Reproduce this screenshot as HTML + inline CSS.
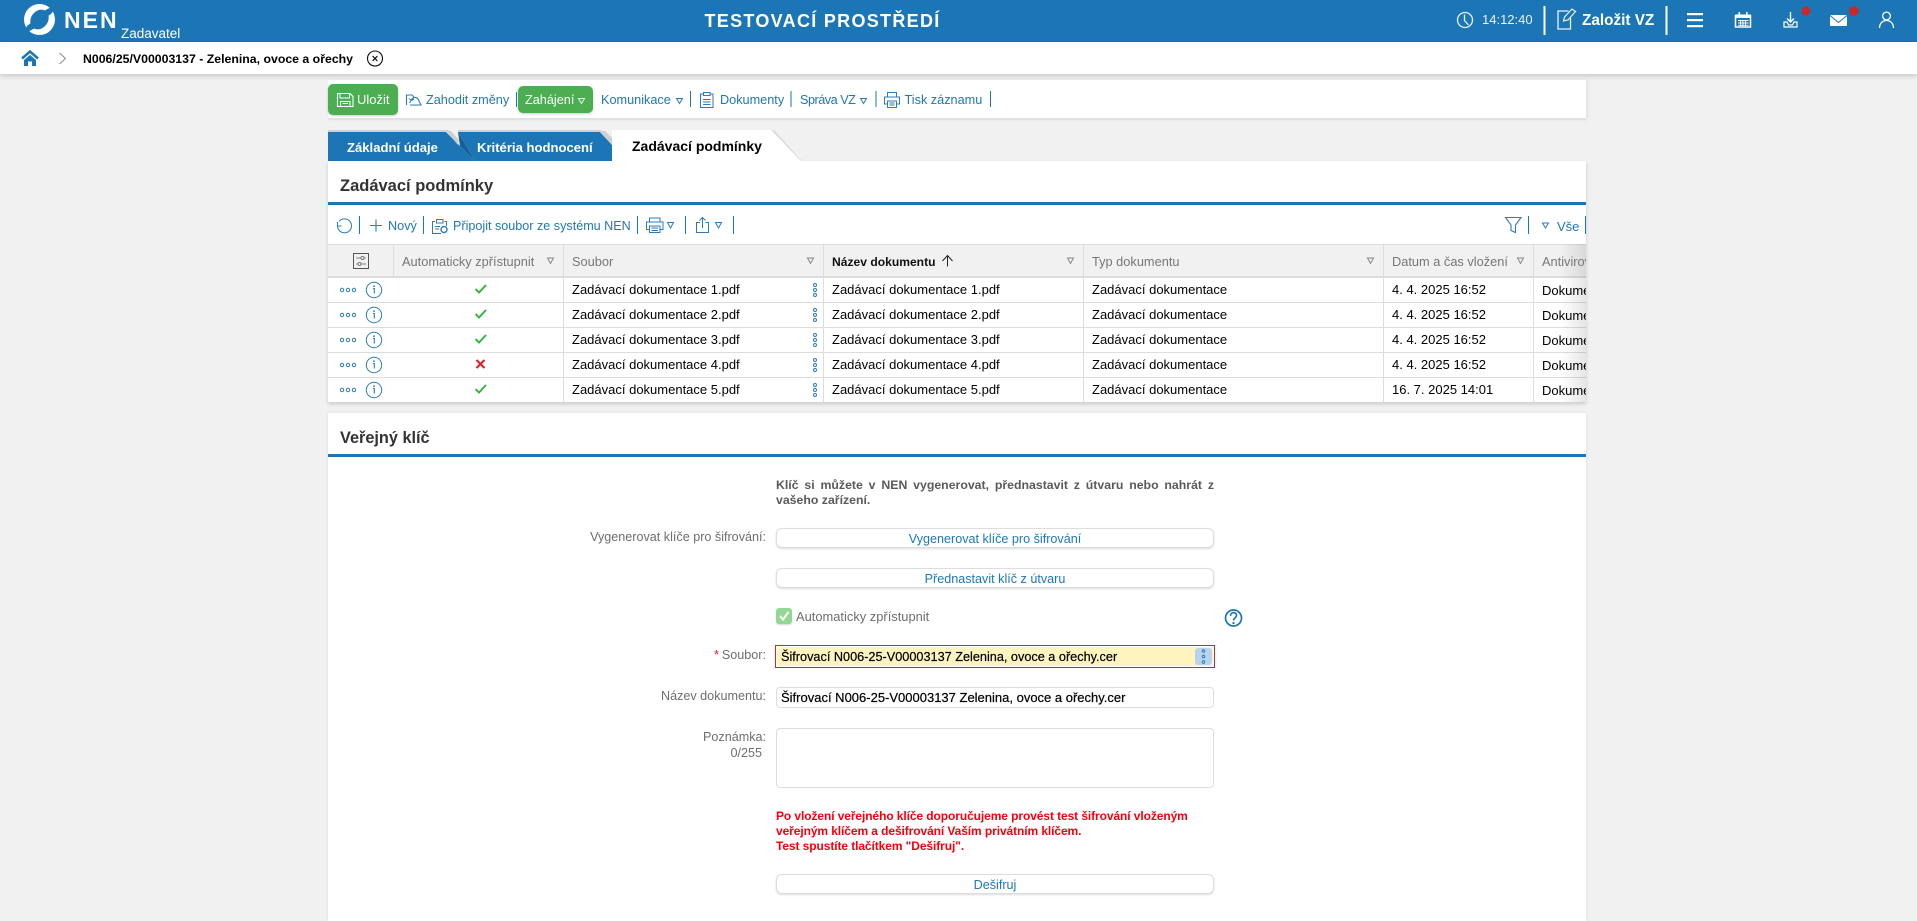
<!DOCTYPE html>
<html lang="cs"><head><meta charset="utf-8"><title>NEN</title>
<style>
html,body{margin:0;padding:0;width:1917px;height:921px;overflow:hidden;background:#f1f1f1;font-family:"Liberation Sans",sans-serif;font-size:13px;color:#000}
.a{position:absolute}
.t{position:absolute;white-space:nowrap;line-height:16px;height:16px}
.b{color:#1f77b5}
.g{color:#777}
.h{color:#777;font-size:12.8px}
.w{color:#fff}
.s{font-weight:bold}
.lbl{position:absolute;white-space:nowrap;line-height:16px;height:16px;color:#6e6e6e;text-align:right;font-size:12.6px}
.btn{position:absolute;left:776px;width:436px;height:18px;border:1px solid #ddd;border-radius:6px;background:#fff;box-shadow:0 1px 2px rgba(0,0,0,.14);text-align:center;line-height:20px;color:#1f77b5;font-size:12.6px}
svg{position:absolute;left:0;top:0}
</style></head><body>
<div class="a" style="left:0;top:0;width:1917px;height:42px;background:#1c75b4"></div>
<div class="a" style="left:0;top:42px;width:1917px;height:32px;background:#fff;box-shadow:0 2px 5px rgba(0,0,0,.18)"></div>
<div class="a" style="left:328px;top:80px;width:1258px;height:38px;background:#fff;border-bottom:2px solid #e2e2e2;box-shadow:2px 0 3px rgba(0,0,0,.06)"></div>
<div class="a" style="left:328px;top:161px;width:1258px;height:241px;background:#fff;box-shadow:0 2px 4px rgba(0,0,0,.16)"></div>
<div class="a" style="left:328px;top:413px;width:1258px;height:508px;background:#fff;box-shadow:0 0 3px rgba(0,0,0,.1)"></div>
<div class="a" style="left:328px;top:202px;width:1258px;height:3px;background:#1c75b4"></div>
<div class="a" style="left:328px;top:454px;width:1258px;height:3px;background:#1c75b4"></div>
<div class="a" style="left:328px;top:244px;width:1258px;height:31px;background:#f1f1f1;border-top:1px solid #ddd;border-bottom:2px solid #ddd"></div>
<div class="a" style="left:328px;top:84px;width:70px;height:31px;background:#4cae51;border-radius:5px;box-shadow:0 1px 2px rgba(0,0,0,.2)"></div>
<div class="a" style="left:517.500px;top:86px;width:75.500px;height:27px;background:#4cae51;border-radius:5px;box-shadow:0 1px 2px rgba(0,0,0,.2)"></div>
<div class="btn" style="top:528px">Vygenerovat klíče pro šifrování</div>
<div class="btn" style="top:568px">Přednastavit klíč z útvaru</div>
<div class="btn" style="top:874px">Dešifruj</div>
<div class="a" style="left:775px;top:645px;width:438px;height:21px;border:1px solid #d8232a;background:#fff"></div>
<div class="a" style="left:777px;top:647px;width:436px;height:19px;background:#fdf5bd;border-radius:4px"></div>
<div class="a" style="left:1195px;top:648px;width:17px;height:17px;background:#b9d3ee;border-radius:3px"></div>
<div class="a" style="left:776px;top:687px;width:436px;height:19px;border:1px solid #ddd;border-radius:4px;background:#fff"></div>
<div class="a" style="left:776px;top:728px;width:436px;height:58px;border:1px solid #ddd;border-radius:4px;background:#fff"></div>
<div class="a" style="left:776px;top:608px;width:16px;height:16px;background:#92d794;border-radius:3px;box-shadow:0 1px 1px rgba(0,0,0,.15)"></div>

<svg width="1917" height="921" viewBox="0 0 1917 921" fill="none">
<!-- tabs -->
<rect x="328" y="130" width="120" height="2" fill="#d0d0d0"/><rect x="458" y="130" width="143" height="2" fill="#d0d0d0"/>
<path d="M328 132H446L475 161H328Z" fill="#1c75b4"/>
<path d="M446 130.500L451 131L459 140L458 145Z" fill="#cfcfcf"/>
<path d="M458 132L475 161L460 146Z" fill="#155f96"/>
<path d="M458 132H600L612 145V161H475Z" fill="#1c75b4"/>
<path d="M600 131L605 131L612 138V145Z" fill="#cfcfcf"/>
<path d="M612 130H771L801 161H612Z" fill="#fff"/>
<path d="M771 130L775 131L802 161H801Z" fill="#dcdcdc"/>
<!-- logo -->
<circle cx="39.500" cy="19.500" r="15.500" fill="#fff"/>
<ellipse cx="39.500" cy="19.500" rx="8.500" ry="10.500" transform="rotate(35 39.500 19.500)" fill="#1c75b4"/>
<path d="M44 11C48 8.500 51 7 55 7L52 13L47 17Z" fill="#1c75b4"/>
<path d="M35 28C31 30.500 28 32 24 32L27 26L32 22Z" fill="#1c75b4"/>
<!-- home -->
<path d="M22 58.500L30 51.500L38 58.500" stroke="#1c75b4" stroke-width="2.500"/>
<path d="M24 60L30 55L36 60V66H32V61.500H28V66H24Z" fill="#1c75b4"/>
<path d="M59.500 53L65.500 58.500L59.500 64" stroke="#8a8a8a" stroke-width="1"/>
<circle cx="375" cy="58.500" r="7.500" stroke="#111" stroke-width="1.100"/><path d="M372.600 56.100L377.400 60.900M377.400 56.100L372.600 60.900" stroke="#111" stroke-width="1.200"/>
<!-- header right -->
<circle cx="1465" cy="20" r="7.500" stroke="#e9f2f8" stroke-width="1.300"/><path d="M1464.500 14.500V20.500L1468.500 25" stroke="#e9f2f8" stroke-width="1.300"/>
<rect x="1543.500" y="6" width="2" height="29" fill="#fff"/><rect x="1665.500" y="6" width="2" height="29" fill="#fff"/>
<g transform="translate(-2.500 0)"><path d="M1571 14H1560.500V32H1573V21" stroke="#e9f2f8" stroke-width="1.300" transform="translate(0 -3) scale(1 1)"/><path d="M1566 21L1567 17L1574.500 9L1578 11.500L1570.500 20Z" stroke="#e9f2f8" stroke-width="1.200"/></g>
<rect x="1687" y="13" width="16" height="2.200" fill="#fff"/><rect x="1687" y="19" width="16" height="2.200" fill="#fff"/><rect x="1687" y="25" width="16" height="2.200" fill="#fff"/>
<g transform="translate(-1.500 0)"><path d="M1737 15.500H1752V27H1737Z" stroke="#fff" stroke-width="1.500"/><rect x="1737" y="14.500" width="15" height="3.500" fill="#fff"/><rect x="1740" y="12" width="1.600" height="3" fill="#fff"/><rect x="1747.500" y="12" width="1.600" height="3" fill="#fff"/><path d="M1739.500 20.500H1750M1739.500 23H1750M1739.500 25.300H1750M1742 20V26M1744.500 20V26M1747 20V26" stroke="#fff" stroke-width=".9"/></g>
<g transform="translate(-2.500 0)"><path d="M1793 12V22M1789.500 18.500L1793 22L1796.500 18.500" stroke="#fff" stroke-width="1.400"/><path d="M1786.500 22H1789.500L1791 25H1795L1796.500 22H1799.500V27H1786.500Z" fill="none" stroke="#fff" stroke-width="1.200"/></g>
<circle cx="1806" cy="11" r="4.500" fill="#c62a2a"/>
<rect x="1830" y="15" width="17" height="11" rx="1" fill="#fff"/><path d="M1830 15.500L1838.500 22.500L1847 15.500" stroke="#1c75b4" stroke-width="1"/>
<circle cx="1854" cy="11" r="4.800" fill="#c62a2a"/>
<g transform="translate(-1.500 0)"><circle cx="1888" cy="16" r="3.900" stroke="#fff" stroke-width="1.300"/><path d="M1881 28C1881 23.500 1884 20.500 1888 20.500C1892 20.500 1895 23.500 1895 28" stroke="#fff" stroke-width="1.300"/></g>
<!-- save -->
<path d="M337.500 93.500H350L353 96.500V106.500H337.500Z" stroke="#fff" stroke-width="1.100"/><path d="M340 93.500V98H349.500V93.500M340.500 106.500V101.500H350V106.500M342.500 103.500H348" stroke="#fff" stroke-width="1"/>
<path d="M406.500 105V95H412L414 97" stroke="#2a7db9" stroke-width="1.100"/><path d="M410 105H421L418 99C416 96.500 413 97 411.500 100L409.500 103M409 98.500L411.500 100.500L414 99" stroke="#2a7db9" stroke-width="1.100"/>
<rect x="516" y="92" width="1" height="15" fill="#1c75b4"/>
<path d="M578.500 98.500H584.500L581.500 103.500Z" stroke="#e8f5e8" stroke-width="1"/>
<path d="M676.500 98.500H682.500L679.500 103.500Z" stroke="#2a7db9" stroke-width="1"/>
<rect x="690" y="91" width="1" height="16" fill="#1c75b4"/>
<path d="M703 94H700.500V107.500H713V94H710.500M703.500 92.500H710V95.500H703.500ZM703 99.500H710.500M703 102H710.500M703 104.500H710.500" stroke="#2a7db9" stroke-width="1"/>
<rect x="790.500" y="91" width="1" height="16" fill="#1c75b4"/>
<path d="M860.500 98.500H866.500L863.500 103.500Z" stroke="#2a7db9" stroke-width="1"/>
<rect x="875.500" y="91" width="1" height="16" fill="#1c75b4"/>
<path d="M887.500 97V92.500H896.500V97M887 104H884.500V97H899.500V104H897M887.500 101H896.500V107.500H887.500ZM889.500 103H894.500M889.500 105H894.500" stroke="#2a7db9" stroke-width="1"/>
<rect x="990" y="91" width="1" height="16" fill="#1c75b4"/>
<!-- grid toolbar -->
<path d="M339 221.500A7 7 0 1 1 337.500 226M337.500 222V226H341.500" stroke="#2a7db9" stroke-width="1"/>
<rect x="359" y="216" width="1" height="18" fill="#1c75b4"/>
<path d="M376 219.500V231.500M370 225.500H382" stroke="#2a7db9" stroke-width="1.100"/>
<rect x="423" y="216" width="1" height="18" fill="#1c75b4"/>
<path d="M435 221.500H432.500V233.500H441M444.500 221.500H446.500V226M436.500 219.500H443V223H436.500ZM435 226.500H440M435 229H439" stroke="#2a7db9" stroke-width="1"/><circle cx="444" cy="229.500" r="3" stroke="#2a7db9" stroke-width="1.400"/>
<rect x="637" y="216" width="1" height="18" fill="#1c75b4"/>
<path d="M649.500 222V218H660V222M649 229.500H646.500V222H663V229.500H660.500M649.500 226H660V232.500H649.500ZM651.500 228H658M651.500 230.500H658" stroke="#2a7db9" stroke-width="1"/>
<path d="M667.500 222.500H673.500L670.500 228Z" stroke="#2a7db9" stroke-width="1"/>
<rect x="685" y="216" width="1" height="18" fill="#1c75b4"/>
<path d="M700 222.500H696.500V232.500H708.500V222.500H705.500M702.500 228V217.500M699.500 220.500L702.500 217.500L705.500 220.500" stroke="#2a7db9" stroke-width="1"/>
<path d="M715.500 222.500H721.500L718.500 228Z" stroke="#2a7db9" stroke-width="1"/>
<rect x="733" y="216" width="1" height="18" fill="#1c75b4"/>
<path d="M1505.500 217.500H1521L1515.500 225V232.500L1511 230.500V225Z" stroke="#2a7db9" stroke-width="1.100"/>
<rect x="1528" y="216" width="1" height="18" fill="#1c75b4"/>
<path d="M1542.500 223H1548.500L1545.500 228Z" stroke="#2a7db9" stroke-width="1"/>
<rect x="1585" y="216" width="1" height="18" fill="#1c75b4"/>
<!-- grid header -->
<rect x="353.500" y="253.500" width="15" height="15" stroke="#555" stroke-width="1"/><path d="M356 258H366M356 264H366" stroke="#888" stroke-width="1"/><circle cx="362.500" cy="258" r="1.500" fill="#fff" stroke="#777"/><circle cx="359.500" cy="264" r="1.500" fill="#fff" stroke="#777"/>
<g fill="#ddd"><rect x="393" y="245" width="1" height="31"/><rect x="563" y="245" width="1" height="157"/><rect x="823" y="245" width="1" height="157"/><rect x="1083" y="245" width="1" height="157"/><rect x="1383" y="245" width="1" height="157"/><rect x="1533" y="245" width="1" height="157"/>
<rect x="328" y="302" width="1258" height="1"/><rect x="328" y="327" width="1258" height="1"/><rect x="328" y="352" width="1258" height="1"/><rect x="328" y="377" width="1258" height="1"/></g>
<g stroke="#888" stroke-width="1"><path d="M547.500 258H553.500L550.500 263.500Z"/><path d="M807.500 258H813.500L810.500 263.500Z"/><path d="M1067.500 258H1073.500L1070.500 263.500Z"/><path d="M1367.500 258H1373.500L1370.500 263.500Z"/><path d="M1517.500 258H1523.500L1520.500 263.500Z"/></g>
<path d="M947.500 266.500V256M942.500 261L947.500 255.500L952.500 261" stroke="#222" stroke-width="1"/>
<defs><g id="dots"><circle cx="342" cy="0" r="1.700" stroke="#2a7db9" stroke-width="1"/><circle cx="348" cy="0" r="1.700" stroke="#2a7db9" stroke-width="1"/><circle cx="354" cy="0" r="1.700" stroke="#2a7db9" stroke-width="1"/><circle cx="374" cy="0" r="7.700" stroke="#2a7db9" stroke-width="1"/><circle cx="374" cy="-3.800" r=".9" fill="#2a7db9"/><path d="M373 -1.500H374.300V3.500" stroke="#2a7db9" stroke-width="1.100"/><circle cx="815" cy="-5" r="1.500" stroke="#2a7db9" stroke-width="1"/><circle cx="815" cy="0" r="1.500" stroke="#2a7db9" stroke-width="1"/><circle cx="815" cy="5" r="1.500" stroke="#2a7db9" stroke-width="1"/></g>
<path id="ok" d="M475.500 289L479 292.500L486 285" stroke="#2eb43a" stroke-width="1.900"/></defs>
<use href="#dots" y="290"/><use href="#dots" y="315"/><use href="#dots" y="340"/><use href="#dots" y="365"/><use href="#dots" y="390"/>
<use href="#ok"/><use href="#ok" y="25"/><use href="#ok" y="50"/><use href="#ok" y="100"/>
<path d="M476.500 360L484.500 368M484.500 360L476.500 368" stroke="#d6262c" stroke-width="2.200"/>
<!-- form icons -->
<path d="M780 616L783 619.500L788.500 612" stroke="#fff" stroke-width="2"/>
<circle cx="1233.500" cy="618" r="8" stroke="#1c75b4" stroke-width="1.700"/><path d="M1230.500 616C1230.500 611.500 1236.500 611.500 1236.500 615.500C1236.500 618 1233.500 618 1233.500 620.500" stroke="#1c75b4" stroke-width="1.600"/><rect x="1232.500" y="622" width="2" height="2" fill="#1c75b4"/>
<circle cx="1203.500" cy="651" r="1.300" stroke="#2a7db9"/><circle cx="1203.500" cy="656.500" r="1.300" stroke="#2a7db9"/><circle cx="1203.500" cy="662" r="1.300" stroke="#2a7db9"/>
</svg>
<div class="a" style="left:1560px;top:244px;width:26px;height:158px;background:linear-gradient(90deg,rgba(0,0,0,0),rgba(0,0,0,.1))"></div>

<div class="t w s" style="left:64px;top:8px;height:24px;line-height:24px;font-size:23px;letter-spacing:2px">NEN</div>
<div class="t w" style="left:121px;top:26px;font-size:13.500px">Zadavatel</div>
<div class="t w s" style="left:704.500px;top:11px;height:20px;line-height:20px;font-size:18px;letter-spacing:1.300px">TESTOVACÍ PROSTŘEDÍ</div>
<div class="t" style="left:1482px;top:12px;color:#e9f2f8;font-size:13px">14:12:40</div>
<div class="t w s" style="left:1582px;top:11px;height:20px;line-height:20px;font-size:15.300px">Založit VZ</div>
<div class="t s" style="left:83px;top:51px;font-size:12.300px">N006/25/V00003137 - Zelenina, ovoce a ořechy</div>

<div class="t w" style="left:357px;top:92px;font-size:13px">Uložit</div>
<div class="t b" style="left:426px;top:92px;font-size:12.700px">Zahodit změny</div>
<div class="t w" style="left:525px;top:92px;font-size:12.700px">Zahájení</div>
<div class="t b" style="left:601px;top:92px;font-size:12.700px">Komunikace</div>
<div class="t b" style="left:720px;top:92px;font-size:12.700px">Dokumenty</div>
<div class="t b" style="left:800px;top:92px;font-size:12.700px;letter-spacing:-.5px">Správa VZ</div>
<div class="t b" style="left:904.500px;top:92px;font-size:12.700px">Tisk záznamu</div>

<div class="t w s" style="left:347px;top:139.500px;font-size:13.100px">Základní údaje</div>
<div class="t w s" style="left:477px;top:139.500px;font-size:13.100px">Kritéria hodnocení</div>
<div class="t s" style="left:632px;top:138px;font-size:14px">Zadávací podmínky</div>

<div class="t s" style="left:340px;top:176px;height:20px;line-height:20px;font-size:16.500px;color:#333">Zadávací podmínky</div>
<div class="t s" style="left:340px;top:428px;height:20px;line-height:20px;font-size:16.300px;color:#333">Veřejný klíč</div>

<div class="t b" style="left:388px;top:218px;font-size:12.700px">Nový</div>
<div class="t b" style="left:453px;top:218px;font-size:12.600px">Připojit soubor ze systému NEN</div>
<div class="t b" style="left:1557px;top:219px">Vše</div>

<div class="t h" style="left:402px;top:254px">Automaticky zpřístupnit</div>
<div class="t h" style="left:572px;top:254px">Soubor</div>
<div class="t s" style="left:832px;top:254px;font-size:12.100px;color:#111">Název dokumentu</div>
<div class="t h" style="left:1092px;top:254px">Typ dokumentu</div>
<div class="t h" style="left:1392px;top:254px">Datum a čas vložení</div>
<div class="a" style="left:1542px;top:254px;width:44px;height:16px;overflow:hidden;line-height:16px;white-space:nowrap;color:#777;font-size:12.800px">Antivirová</div>

<div class="t" style="left:572px;top:282px">Zadávací dokumentace 1.pdf</div><div class="t" style="left:832px;top:282px">Zadávací dokumentace 1.pdf</div><div class="t" style="left:1092px;top:282px">Zadávací dokumentace</div><div class="t" style="left:1392px;top:282px">4. 4. 2025 16:52</div>
<div class="t" style="left:572px;top:307px">Zadávací dokumentace 2.pdf</div><div class="t" style="left:832px;top:307px">Zadávací dokumentace 2.pdf</div><div class="t" style="left:1092px;top:307px">Zadávací dokumentace</div><div class="t" style="left:1392px;top:307px">4. 4. 2025 16:52</div>
<div class="t" style="left:572px;top:332px">Zadávací dokumentace 3.pdf</div><div class="t" style="left:832px;top:332px">Zadávací dokumentace 3.pdf</div><div class="t" style="left:1092px;top:332px">Zadávací dokumentace</div><div class="t" style="left:1392px;top:332px">4. 4. 2025 16:52</div>
<div class="t" style="left:572px;top:357px">Zadávací dokumentace 4.pdf</div><div class="t" style="left:832px;top:357px">Zadávací dokumentace 4.pdf</div><div class="t" style="left:1092px;top:357px">Zadávací dokumentace</div><div class="t" style="left:1392px;top:357px">4. 4. 2025 16:52</div>
<div class="t" style="left:572px;top:382px">Zadávací dokumentace 5.pdf</div><div class="t" style="left:832px;top:382px">Zadávací dokumentace 5.pdf</div><div class="t" style="left:1092px;top:382px">Zadávací dokumentace</div><div class="t" style="left:1392px;top:382px">16. 7. 2025 14:01</div>
<div class="a" style="left:1542px;top:277.500px;width:44px;height:125px;overflow:hidden;line-height:25px;white-space:nowrap">Dokument<br>Dokument<br>Dokument<br>Dokument<br>Dokument</div>

<div class="a s" style="left:776px;top:478px;width:438px;font-size:12.300px;line-height:15px;color:#5a5a5a;text-align:justify">Klíč si můžete v NEN vygenerovat, přednastavit z útvaru nebo nahrát z vašeho zařízení.</div>
<div class="lbl" style="right:1151px;top:529px">Vygenerovat klíče pro šifrování:</div>
<div class="t g" style="left:796px;top:609px;font-size:12.900px;color:#6e6e6e">Automaticky zpřístupnit</div>
<div class="t" style="left:714px;top:647px;color:#d8232a">*</div>
<div class="lbl" style="right:1151px;top:647px">Soubor:</div>
<div class="t" style="left:781px;top:649px;font-size:12.700px;-webkit-text-stroke:.2px #000">Šifrovací N006-25-V00003137 Zelenina, ovoce a ořechy.cer</div>
<div class="lbl" style="right:1151px;top:688px">Název dokumentu:</div>
<div class="t" style="left:781px;top:690px;font-size:13px;-webkit-text-stroke:.2px #000">Šifrovací N006-25-V00003137 Zelenina, ovoce a ořechy.cer</div>
<div class="lbl" style="right:1151px;top:729px">Poznámka:</div>
<div class="lbl" style="right:1155px;top:745px">0/255</div>
<div class="a s" style="left:776px;top:809px;font-size:12px;letter-spacing:-.09px;line-height:15px;color:#f4000f;white-space:nowrap">Po vložení veřejného klíče doporučujeme provést test šifrování vloženým<br>veřejným klíčem a dešifrování Vaším privátním klíčem.<br>Test spustíte tlačítkem "Dešifruj".</div>
</body></html>
